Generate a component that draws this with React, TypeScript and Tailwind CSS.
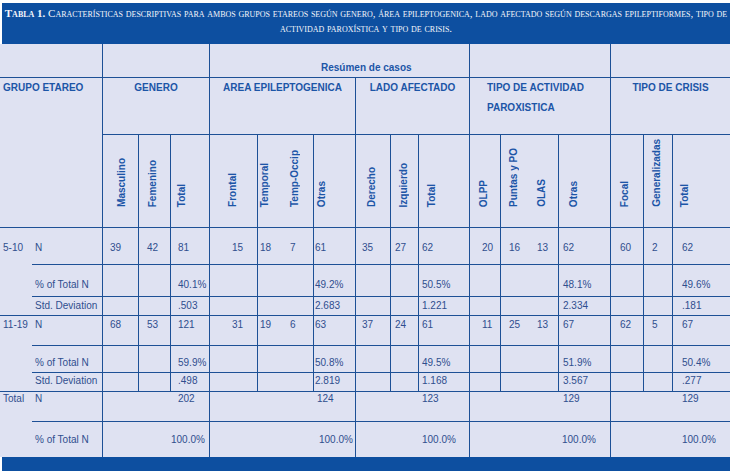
import React from "react";

const LINE = "border-[#1d5096]";
const H = "font-bold text-[#1c55a7]";
const D = "text-[#2f4e8e]";

const CS = [
  "",
  "col-start-1",
  "col-start-2",
  "col-start-3",
  "col-start-4",
  "col-start-5",
  "col-start-6",
  "col-start-7",
  "col-start-8",
  "col-start-9",
  "col-start-10",
  "col-start-11",
  "col-start-12",
  "col-start-13",
  "col-start-14",
  "col-start-15",
  "col-start-16",
  "col-start-17",
  "col-start-18",
  "col-start-19",
];
const RS = [
  "",
  "row-start-1",
  "row-start-2",
  "row-start-3",
  "row-start-4",
  "row-start-5",
  "row-start-6",
  "row-start-7",
  "row-start-8",
  "row-start-9",
  "row-start-10",
  "row-start-11",
];

// columns that have a vertical line on their left in sub-header & data rows
const LCOLS = new Set([3, 4, 5, 6, 7, 9, 10, 11, 12, 13, 14, 16, 17, 18, 19]);
// columns with a vertical line in the total rows
const TCOLS = new Set([3, 6, 10, 13, 17]);

const PL: Record<number, string> = {
  3: "pl-[7px]",
  4: "pl-[8px]",
  5: "pl-[7px]",
  6: "pl-[22px]",
  7: "pl-[2px]",
  8: "pl-[5px]",
  9: "pl-[1px]",
  10: "pl-[6px]",
  11: "pl-[4px]",
  12: "pl-[3px]",
  13: "pl-[12px]",
  14: "pl-[8px]",
  15: "pl-[7px]",
  16: "pl-[4px]",
  17: "pl-[9px]",
  18: "pl-[8px]",
  19: "pl-[9px]",
};

const SUB: { c: number; t: string; ml: string }[] = [
  { c: 3, t: "Masculino", ml: "ml-[13px]" },
  { c: 4, t: "Femenino", ml: "ml-[8px]" },
  { c: 5, t: "Total", ml: "ml-[5px]" },
  { c: 6, t: "Frontal", ml: "ml-[17px]" },
  { c: 7, t: "Temporal", ml: "ml-[1px]" },
  { c: 8, t: "Temp-Occip", ml: "ml-[4px]" },
  { c: 9, t: "Otras", ml: "ml-[2px]" },
  { c: 10, t: "Derecho", ml: "ml-[10px]" },
  { c: 11, t: "Izquierdo", ml: "ml-[7px]" },
  { c: 12, t: "Total", ml: "ml-[7px]" },
  { c: 13, t: "OLPP", ml: "ml-[8px]" },
  { c: 14, t: "Puntas y PO", ml: "ml-[7px]" },
  { c: 15, t: "OLAS", ml: "ml-[6px]" },
  { c: 16, t: "Otras", ml: "ml-[9px]" },
  { c: 17, t: "Focal", ml: "ml-[8px]" },
  { c: 18, t: "Generalizadas", ml: "ml-[7px]" },
  { c: 19, t: "Total", ml: "ml-[6px]" },
];

type DRow = { row: number; name: string; pt: string; vals: Record<number, string> };

const GROUPS: { label: string; start: number; rows: DRow[] }[] = [
  {
    label: "5-10",
    start: 4,
    rows: [
      {
        row: 4,
        name: "N",
        pt: "pt-[14px]",
        vals: { 3: "39", 4: "42", 5: "81", 6: "15", 7: "18", 8: "7", 9: "61", 10: "35", 11: "27", 12: "62", 13: "20", 14: "16", 15: "13", 16: "62", 17: "60", 18: "2", 19: "62" },
      },
      { row: 5, name: "% of Total N", pt: "pt-[14px]", vals: { 5: "40.1%", 9: "49.2%", 12: "50.5%", 16: "48.1%", 19: "49.6%" } },
      { row: 6, name: "Std. Deviation", pt: "pt-[3px]", vals: { 5: ".503", 9: "2.683", 12: "1.221", 16: "2.334", 19: ".181" } },
    ],
  },
  {
    label: "11-19",
    start: 7,
    rows: [
      {
        row: 7,
        name: "N",
        pt: "pt-[3px]",
        vals: { 3: "68", 4: "53", 5: "121", 6: "31", 7: "19", 8: "6", 9: "63", 10: "37", 11: "24", 12: "61", 13: "11", 14: "25", 15: "13", 16: "67", 17: "62", 18: "5", 19: "67" },
      },
      { row: 8, name: "% of Total N", pt: "pt-[11px]", vals: { 5: "59.9%", 9: "50.8%", 12: "49.5%", 16: "51.9%", 19: "50.4%" } },
      { row: 9, name: "Std. Deviation", pt: "pt-[2px]", vals: { 5: ".498", 9: "2.819", 12: "1.168", 16: "3.567", 19: ".277" } },
    ],
  },
];

const TOTALS: { row: number; name: string; pt: string; vals: Record<number, [string, string]> }[] = [
  {
    row: 10,
    name: "N",
    pt: "pt-[1px]",
    vals: { 5: ["202", "pl-[8px]"], 9: ["124", "pl-[4px]"], 12: ["123", "pl-[4px]"], 16: ["129", "pl-[5px]"], 19: ["129", "pl-[10px]"] },
  },
  {
    row: 11,
    name: "% of Total N",
    pt: "pt-[12px]",
    vals: { 5: ["100.0%", "pl-[1px]"], 9: ["100.0%", "pl-[6px]"], 12: ["100.0%", "pl-[4px]"], 16: ["100.0%", "pl-[4px]"], 19: ["100.0%", "pl-[10px]"] },
  },
];

function TableGrid() {
  const cells: React.ReactNode[] = [];

  // Row 1
  cells.push(<div key="r1a" className="col-start-1 col-span-2 row-start-1" />);
  cells.push(<div key="r1b" className={`col-start-3 col-span-3 row-start-1 border-l ${LINE}`} />);
  cells.push(
    <div key="r1c" className={`col-start-6 col-span-7 row-start-1 border-l ${LINE} pl-[111px] pt-[18px] whitespace-nowrap ${H}`}>
      Resúmen de casos
    </div>
  );
  cells.push(<div key="r1d" className={`col-start-13 col-span-4 row-start-1 border-l ${LINE}`} />);
  cells.push(<div key="r1e" className={`col-start-17 col-span-3 row-start-1 border-l ${LINE}`} />);

  // Row 2 group headers
  cells.push(
    <div key="r2a" className={`col-start-1 col-span-2 row-start-2 row-span-2 border-t ${LINE} pl-[3px] leading-[20px] whitespace-nowrap ${H}`}>
      GRUPO ETAREO
    </div>
  );
  cells.push(
    <div key="r2b" className={`col-start-3 col-span-3 row-start-2 border-t border-l ${LINE} text-center leading-[20px] whitespace-nowrap ${H}`}>
      GENERO
    </div>
  );
  cells.push(
    <div key="r2c" className={`col-start-6 col-span-4 row-start-2 border-t border-l ${LINE} text-center leading-[20px] whitespace-nowrap ${H}`}>
      AREA EPILEPTOGENICA
    </div>
  );
  cells.push(
    <div key="r2d" className={`col-start-10 col-span-3 row-start-2 border-t border-l ${LINE} text-center leading-[20px] whitespace-nowrap ${H}`}>
      LADO AFECTADO
    </div>
  );
  cells.push(
    <div key="r2e" className={`col-start-13 col-span-4 row-start-2 border-t border-l ${LINE} pl-[17px] leading-[20px] whitespace-nowrap ${H}`}>
      TIPO DE ACTIVIDAD
      <br />
      PAROXISTICA
    </div>
  );
  cells.push(
    <div key="r2f" className={`col-start-17 col-span-3 row-start-2 border-t border-l ${LINE} text-center leading-[20px] whitespace-nowrap ${H}`}>
      TIPO DE CRISIS
    </div>
  );

  // Row 3 sub headers
  SUB.forEach((s) => {
    cells.push(
      <div
        key={`sub${s.c}`}
        className={`${CS[s.c]} row-start-3 border-t ${LCOLS.has(s.c) ? "border-l" : ""} ${LINE} flex items-end pb-[20px]`}
      >
        <span className={`${s.ml} [writing-mode:vertical-rl] rotate-180 leading-[12px] whitespace-nowrap ${H}`}>{s.t}</span>
      </div>
    );
  });

  // Data groups
  GROUPS.forEach((g) => {
    cells.push(
      <div key={`g${g.label}`} className={`col-start-1 ${RS[g.start]} row-span-3 border-t ${LINE} pl-[3px] ${g.rows[0].pt} ${D}`}>
        {g.label}
      </div>
    );
    g.rows.forEach((r) => {
      cells.push(
        <div key={`n${r.row}`} className={`col-start-2 ${RS[r.row]} border-t ${LINE} pl-[3px] whitespace-nowrap ${r.pt} ${D}`}>
          {r.name}
        </div>
      );
      for (let c = 3; c <= 19; c++) {
        cells.push(
          <div
            key={`d${r.row}-${c}`}
            className={`${CS[c]} ${RS[r.row]} border-t ${LCOLS.has(c) ? "border-l" : ""} ${LINE} ${PL[c]} ${r.pt} whitespace-nowrap ${D}`}
          >
            {r.vals[c] ?? ""}
          </div>
        );
      }
    });
  });

  // Totals
  cells.push(
    <div key="tot" className={`col-start-1 row-start-10 row-span-2 border-t ${LINE} pl-[3px] pt-[1px] ${D}`}>
      Total
    </div>
  );
  TOTALS.forEach((r) => {
    cells.push(
      <div key={`tn${r.row}`} className={`col-start-2 ${RS[r.row]} border-t ${LINE} pl-[3px] whitespace-nowrap ${r.pt} ${D}`}>
        {r.name}
      </div>
    );
    for (let c = 3; c <= 19; c++) {
      const v = r.vals[c];
      cells.push(
        <div
          key={`t${r.row}-${c}`}
          className={`${CS[c]} ${RS[r.row]} border-t ${TCOLS.has(c) ? "border-l" : ""} ${LINE} ${v ? v[1] : ""} ${r.pt} whitespace-nowrap ${D}`}
        >
          {v ? v[0] : ""}
        </div>
      );
    }
  });

  return (
    <div className="grid w-[730px] bg-[#dfe2f2] grid-cols-[32px_70px_36px_32px_39px_48px_28px_28px_42px_35px_28px_51px_31px_30px_28px_52px_33px_29px_58px] grid-rows-[33px_57px_93px_37px_32px_19px_30px_27px_19px_30px_36px] font-['Liberation_Sans',Arial,sans-serif] text-[10px] leading-[12px]">
      {cells}
    </div>
  );
}

export default function App() {
  return (
    <div className="w-[734px] h-[473px] bg-white pt-[3px] overflow-hidden">
      <div className="ml-[2px] w-[728px] h-[41px] bg-[#0d4fa0] text-[#f4f6fb] text-center pt-[3px] leading-[15px] text-[11px] font-['Liberation_Serif','Times_New_Roman',serif] [font-variant-caps:small-caps]">
        <div className="whitespace-nowrap">
          <span className="font-bold">Tabla 1.</span> Características descriptivas para ambos grupos etareos según genero,
          área epileptogenica, lado afectado según descargas epileptiformes, tipo de
        </div>
        <div className="whitespace-nowrap">actividad paroxística y tipo de crisis.</div>
      </div>
      <TableGrid />
      <div className="ml-[2px] w-[728px] h-[14px] bg-[#0d4fa0]" />
    </div>
  );
}
